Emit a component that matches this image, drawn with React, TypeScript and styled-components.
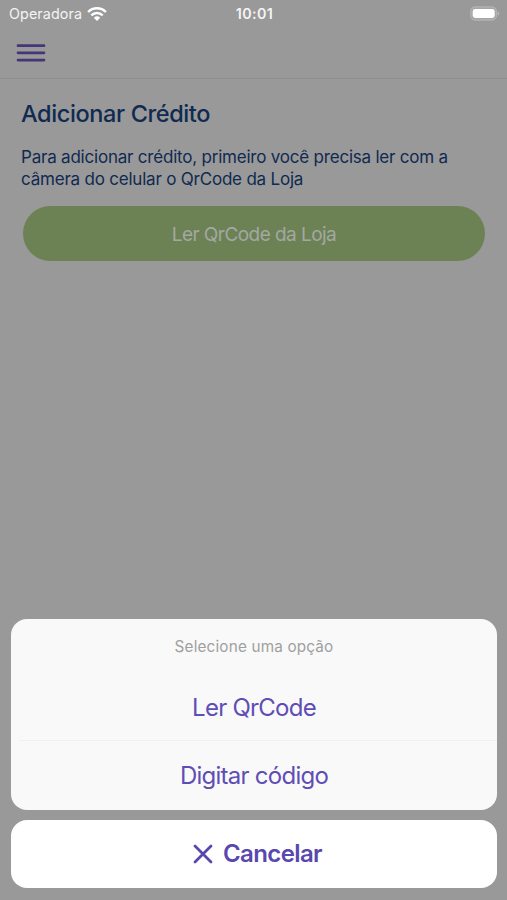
import React from "react";
import styled, { createGlobalStyle } from "styled-components";

const Global = createGlobalStyle`
  *{box-sizing:border-box}
  body{margin:0;background:#999;font-family:Inter,sans-serif}
  h1,p{margin:0}
  button{border:0;background:none;font-family:inherit;padding:0}
`;

const Screen = styled.main`
  width: 507px;
  height: 900px;
  display: flex;
  flex-direction: column;
  background: #999;
  overflow: hidden;
`;

const StatusBar = styled.div`
  height: 27px;
  flex: none;
  display: grid;
  grid-template-columns: 1fr auto 1fr;
  align-items: center;
  color: #f4f4f4;
  padding: 0 7px 0 9px;
  font-size: 14.3px;
`;

const Carrier = styled.div`
  display: flex;
  align-items: center;
  gap: 5px;
  letter-spacing: 0.1px;
`;

const Clock = styled.span`
  font-weight: 600;
  letter-spacing: 0.35px;
`;

const Power = styled.div`
  display: flex;
  justify-content: flex-end;
`;

const Header = styled.header`
  height: 52px;
  flex: none;
  border-bottom: 1px solid #8f8f8f;
  padding: 16px 16px 0;
`;

const Menu = styled.button`
  display: block;
  height: 20px;
`;

const Content = styled.section`
  flex: 1;
  padding: 21px 21px 0;
  color: #102a50;
`;

const Title = styled.h1`
  font-size: 23.5px;
  line-height: 28px;
  font-weight: 500;
  letter-spacing: -0.38px;
`;

const Description = styled.p`
  margin-top: 18px;
  font-size: 17px;
  line-height: 22px;
  letter-spacing: -0.21px;
`;

const Scan = styled.button`
  display: block;
  width: 462px;
  height: 55px;
  margin: 16px 0 0 2px;
  padding-top: 1px;
  border-radius: 28px;
  background: #6c8254;
  color: #a3a8a3;
  font-size: 19px;
  letter-spacing: -0.55px;
`;

const Sheet = styled.div`
  flex: none;
  display: flex;
  flex-direction: column;
  gap: 10px;
  padding: 0 10px 12px 11px;
`;

const Options = styled.div`
  height: 191px;
  border-radius: 16px;
  background: #f9f9f9;
  overflow: hidden;
`;

const Prompt = styled.div`
  height: 54px;
  display: flex;
  align-items: center;
  justify-content: center;
  color: #a0a0a0;
  font-size: 15.3px;
  letter-spacing: 0.16px;
`;

const Option = styled.button`
  display: block;
  width: 100%;
  height: 67px;
  padding-top: 1px;
  color: #5f4db6;
  font-size: 24px;
  letter-spacing: -0.75px;
`;

const Divider = styled.hr`
  height: 1px;
  margin: 0 0 0 8px;
  border: 0;
  background: #f0f0f0;
`;

const Cancel = styled.button`
  display: flex;
  align-items: center;
  justify-content: center;
  gap: 10px;
  height: 68px;
  padding: 0 0 1px 7px;
  border-radius: 16px;
  background: #fff;
  color: #5848ae;
  font-size: 24px;
  font-weight: 600;
  letter-spacing: -0.6px;
`;

function WifiIcon() {
  return (
    <svg width="20" height="16" viewBox="0 0 20 16" fill="none" stroke="#fff" strokeWidth="2.5">
      <path d="M1.1 6C6 1 14 1 18.9 6M4.3 9.3C7.6 6.1 12.4 6.1 15.7 9.3" />
      <path d="M6.8 11.7Q10 9 13.2 11.7L10 15Z" fill="#fff" stroke="none" />
    </svg>
  );
}

function BatteryIcon() {
  return (
    <svg width="30" height="15" viewBox="0 0 30 15">
      <rect x=".8" y=".9" width="25.6" height="13.2" rx="4.2" fill="#a6a6a6" stroke="#b9b9b9" />
      <rect x="2.7" y="3" width="22" height="9" rx="2.4" fill="#fff" />
      <path d="M27.7 5v5q3-2.5 0-5" fill="#b9b9b9" />
    </svg>
  );
}

function MenuIcon() {
  return (
    <svg width="30" height="20" viewBox="0 0 30 20" stroke="#443678" strokeWidth="2.7" strokeLinecap="round">
      <path d="M2 2.7h26M2 9.8h26M2 17.1h26" />
    </svg>
  );
}

function CloseIcon() {
  return (
    <svg width="20" height="20" viewBox="0 0 20 20" stroke="currentColor" strokeWidth="2.8" strokeLinecap="round">
      <path d="m2 2 16 16M18 2 2 18" />
    </svg>
  );
}

export default function App() {
  return (
    <>
      <Global />
      <Screen>
        <StatusBar>
          <Carrier>Operadora <WifiIcon /></Carrier>
          <Clock>10:01</Clock>
          <Power><BatteryIcon /></Power>
        </StatusBar>
        <Header><Menu aria-label="Menu"><MenuIcon /></Menu></Header>
        <Content>
          <Title>Adicionar Crédito</Title>
          <Description>
            Para adicionar crédito, primeiro você precisa ler com a<br />
            câmera do celular o QrCode da Loja
          </Description>
          <Scan>Ler QrCode da Loja</Scan>
        </Content>
        <Sheet>
          <Options>
            <Prompt>Selecione uma opção</Prompt>
            <Option>Ler QrCode</Option>
            <Divider />
            <Option>Digitar código</Option>
          </Options>
          <Cancel><CloseIcon />Cancelar</Cancel>
        </Sheet>
      </Screen>
    </>
  );
}
